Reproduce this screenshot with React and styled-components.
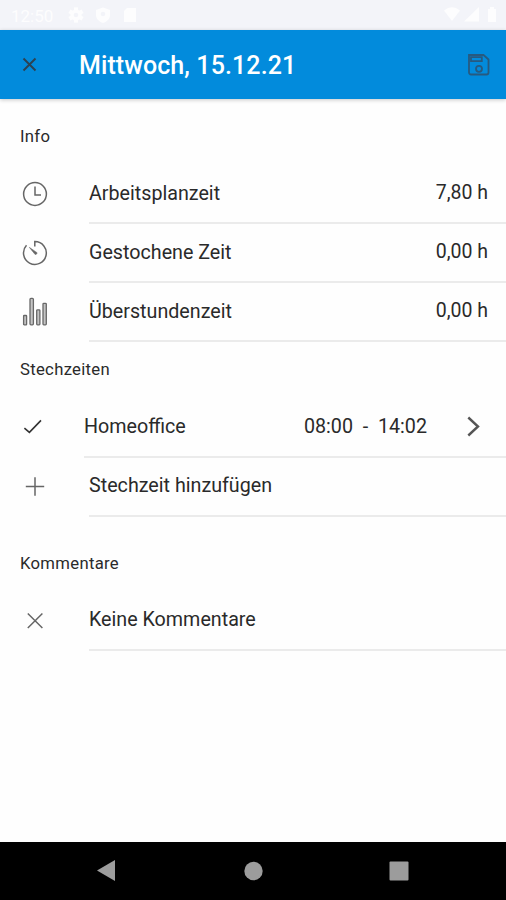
import React from 'react';
import styled, { createGlobalStyle } from 'styled-components';

const GlobalStyle = createGlobalStyle`
  * {
    box-sizing: border-box;
  }

  body {
    margin: 0;
    background: #fefefe;
    font-family: Roboto, sans-serif;
    color: #2a2a2a;
  }
`;

const Screen = styled.div`
  display: flex;
  flex-direction: column;
  width: 506px;
  height: 900px;
  overflow: hidden;
`;

const StatusBar = styled.div`
  display: flex;
  flex: none;
  align-items: center;
  height: 30px;
  padding: 0 8px 0 11px;
  background: #f3f4f9;
  color: #fdfdfe;
`;

const Clock = styled.span`
  width: 57px;
  padding-top: 1px;
  font-size: 17px;
  line-height: 30px;
`;

const StatusIcons = styled.svg`
  display: block;
  flex: none;
  margin-left: ${props => (props.$right ? 'auto' : '0')};
  fill: #fdfdfe;
`;

const Header = styled.header`
  display: flex;
  flex: none;
  align-items: center;
  height: 69px;
  padding: 0 16px 0 22px;
  background: #028bdc;
  box-shadow: 0 1px 4px rgba(0, 0, 0, 0.22);
`;

const Title = styled.h1`
  flex: 1;
  margin: 0 0 0 42px;
  padding-top: 2px;
  color: #fff;
  font-size: 25px;
  font-weight: 500;
  line-height: 30px;
  letter-spacing: 0.1px;
`;

const Icon = styled.svg`
  display: block;
  flex: none;
  fill: none;
  stroke: ${props => props.$color || '#666'};
  stroke-width: ${props => props.$weight || 1.5};
`;

const Content = styled.main`
  flex: 1;
`;

const SectionTitle = styled.h2`
  margin: 0;
  padding: ${props => props.$top}px 0 ${props => props.$bottom}px 20px;
  font-size: 16.7px;
  font-weight: 400;
  line-height: 20px;
  letter-spacing: 0.3px;
`;

const Row = styled.div`
  display: flex;
  height: 59px;
`;

const IconCell = styled.div`
  display: flex;
  flex: none;
  align-items: center;
  width: ${props => props.$width || 89}px;
  padding: 0 0 2px 22px;
`;

const RowBody = styled.div`
  display: flex;
  flex: 1;
  align-items: center;
  padding: 0 18px ${props => props.$lift || 0}px 0;
  border-bottom: 2px solid #ebebeb;
  font-size: 19.7px;
`;

const Label = styled.span`
  flex: 1;
`;

const Value = styled.span`
  padding-bottom: 2px;
  font-size: 19.5px;
  white-space: pre;
`;

const Range = styled.span`
  margin-right: 39px;
  white-space: pre;
`;

const NavBar = styled.nav`
  display: flex;
  flex: none;
  align-items: center;
  height: 58px;
  padding: 0 97px;
  justify-content: space-between;
  background: #000;
`;

const NavIcon = styled.svg`
  display: block;
  fill: #9c9c9c;
`;

const ClockIcon = () => (
  <Icon width="26" height="26" viewBox="0 0 26 26">
    <circle cx="13" cy="13" r="11.4" />
    <path d="M13 5.5V14h6" />
  </Icon>
);

const TimerIcon = () => (
  <Icon width="26" height="26" viewBox="0 0 26 26">
    <path d="M12.8 6.5V1.6A11.4 11.4 0 1 1 4.5 5.3" />
    <path d="M7.4 7.4l5 6.2a1.3 1.3 0 1 0 1.5-1.7z" fill="#666" strokeWidth=".6" />
  </Icon>
);

const ChartIcon = () => (
  <Icon width="26" height="30" viewBox="0 0 26 30" $color="#686868" $weight="1.3">
    <g fill="#c4c4c4">
      <rect x="1.6" y="18.5" width="3" height="9.3" rx=".6" />
      <rect x="8" y="1.3" width="3.4" height="26.5" rx="1" />
      <rect x="14.7" y="12.8" width="3.2" height="15" rx=".8" />
      <rect x="21" y="6.3" width="3.3" height="21.5" rx=".8" />
    </g>
  </Icon>
);

const CheckIcon = () => (
  <Icon width="22" height="18" viewBox="0 0 22 18" $color="#333" $weight="1.6">
    <path d="M2.4 9.2L7.4 13.4L19 1.4" />
  </Icon>
);

const PlusIcon = () => (
  <Icon width="26" height="26" viewBox="0 0 26 26">
    <path d="M13 3.300v18.400M3.800 12.500h18.400" />
  </Icon>
);

const CrossIcon = () => (
  <Icon width="26" height="26" viewBox="0 0 26 26">
    <path d="M5.8 5.500l14.6 14.500M20.400 5.500L5.800 20" />
  </Icon>
);

const SaveIcon = () => (
  <Icon width="22" height="22" viewBox="0 0 22 22" $color="#275a80" $weight="1.8">
    <path d="M1 1h14.5l5 4.5v13a2 2 0 0 1-2 2H3a2 2 0 0 1-2-2z" />
    <path d="M3 3.2h10.8v4H3z" />
    <circle cx="11" cy="14.8" r="3" />
  </Icon>
);

const ChevronIcon = () => (
  <Icon width="22" height="22" viewBox="0 0 22 22" $color="#555" $weight="2.4">
    <path d="M2.3 1.500L12 10.500l-9.700 9" />
  </Icon>
);

const App = () => (
  <>
    <GlobalStyle />
    <Screen>
      <StatusBar>
        <Clock>12:50</Clock>
        <StatusIcons width="72" height="16" viewBox="0 0 72 16">
          <g transform="translate(8 8)">
            <circle r="5.6" />
            <path d="M-2-7.6h4v15.2h-4z" />
            <path d="M-2-7.6h4v15.2h-4z" transform="rotate(60)" />
            <path d="M-2-7.6h4v15.2h-4z" transform="rotate(120)" />
            <circle r="2.3" fill="#f3f4f9" />
          </g>
          <path d="M35 .5l7 2.5v5c0 4-3 6.5-7 8-4-1.5-7-4-7-8V3z" />
          <circle cx="35" cy="7" r="2.3" fill="#f3f4f9" />
          <path d="M59 1h9v14H56V4z" />
        </StatusIcons>
        <StatusIcons $right width="54" height="16" viewBox="0 0 54 16">
          <path d="M0 3.5Q8-3 16 3.5L8 14z" />
          <path d="M20 14.5L35 0v14.5z" />
          <path d="M44 2h2V0h4v2h2v13h-8z" />
        </StatusIcons>
      </StatusBar>

      <Header>
        <Icon width="15" height="15" viewBox="0 0 15 15" $color="#2c4252" $weight="1.9">
          <path d="M1.5 1.5l12 12M13.5 1.5l-12 12" />
        </Icon>
        <Title>Mittwoch, 15.12.21</Title>
        <SaveIcon />
      </Header>

      <Content>
        <SectionTitle $top={28} $bottom={18}>Info</SectionTitle>
        <Row>
          <IconCell><ClockIcon /></IconCell>
          <RowBody>
            <Label>Arbeitsplanzeit</Label>
            <Value>7,80 h</Value>
          </RowBody>
        </Row>
        <Row>
          <IconCell><TimerIcon /></IconCell>
          <RowBody>
            <Label>Gestochene Zeit</Label>
            <Value>0,00 h</Value>
          </RowBody>
        </Row>
        <Row>
          <IconCell><ChartIcon /></IconCell>
          <RowBody>
            <Label>Überstundenzeit</Label>
            <Value>0,00 h</Value>
          </RowBody>
        </Row>

        <SectionTitle $top={18} $bottom={19}>Stechzeiten</SectionTitle>
        <Row>
          <IconCell $width={84}><CheckIcon /></IconCell>
          <RowBody $lift={2}>
            <Label>Homeoffice</Label>
            <Range>08:00  -  14:02</Range>
            <ChevronIcon />
          </RowBody>
        </Row>
        <Row>
          <IconCell><PlusIcon /></IconCell>
          <RowBody $lift={2}>
            <Label>Stechzeit hinzufügen</Label>
          </RowBody>
        </Row>

        <SectionTitle $top={37} $bottom={18}>Kommentare</SectionTitle>
        <Row>
          <IconCell><CrossIcon /></IconCell>
          <RowBody $lift={2}>
            <Label>Keine Kommentare</Label>
          </RowBody>
        </Row>
      </Content>

      <NavBar>
        <NavIcon width="20" height="22" viewBox="0 0 20 22">
          <path d="M18 0v21L0 10.5z" />
        </NavIcon>
        <NavIcon width="20" height="20" viewBox="0 0 20 20">
          <circle cx="10.5" cy="10" r="9.2" />
        </NavIcon>
        <NavIcon width="20" height="20" viewBox="0 0 20 20">
          <rect x=".5" y=".5" width="19" height="19" rx="1" />
        </NavIcon>
      </NavBar>
    </Screen>
  </>
);

export default App;
